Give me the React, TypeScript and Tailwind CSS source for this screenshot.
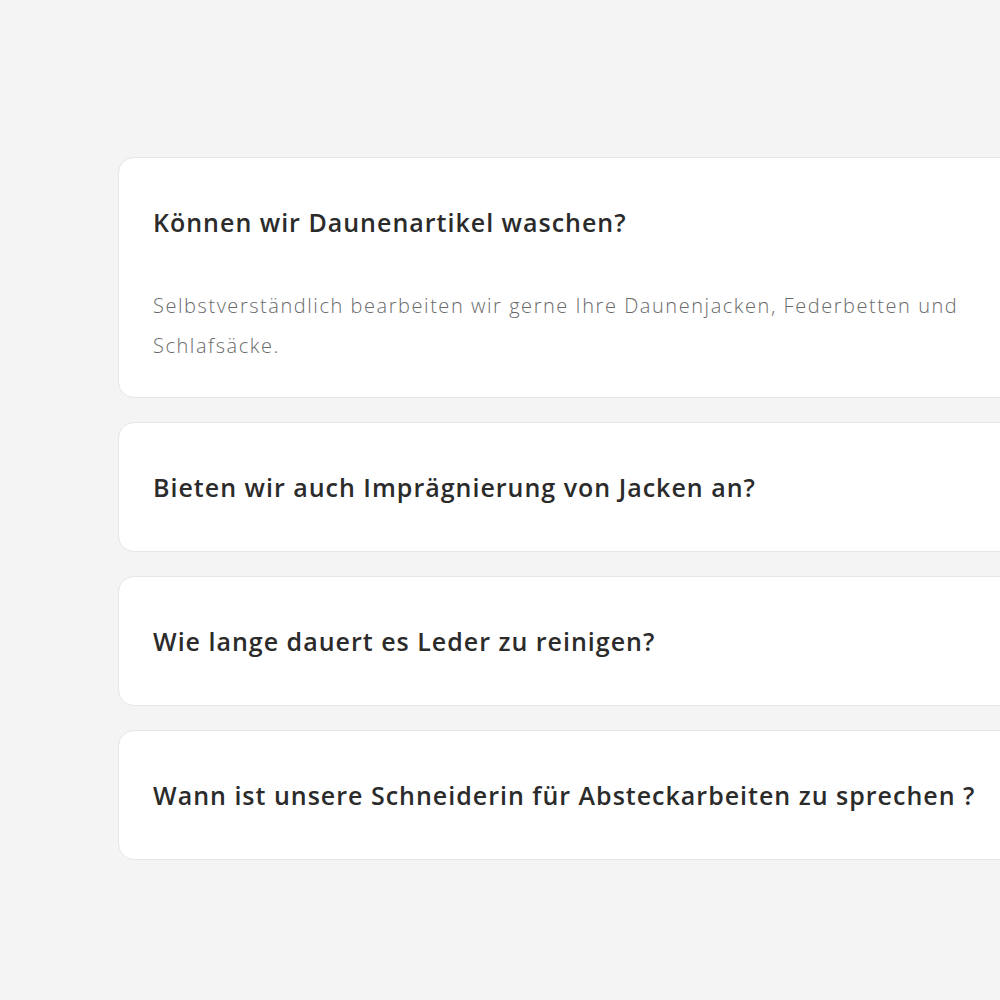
import React from 'react';

interface FaqItem {
  question: string;
  answer?: string;
}

const faqs: FaqItem[] = [
  {
    question: 'Können wir Daunenartikel waschen?',
    answer:
      'Selbstverständlich bearbeiten wir gerne Ihre Daunenjacken, Federbetten und Schlafsäcke.',
  },
  { question: 'Bieten wir auch Imprägnierung von Jacken an?' },
  { question: 'Wie lange dauert es Leder zu reinigen?' },
  { question: 'Wann ist unsere Schneiderin für Absteckarbeiten zu sprechen ?' },
];

function FaqCard({ item }: { item: FaqItem }) {
  return (
    <div className="w-[920px] shrink-0 rounded-2xl border border-[#e6e6e6] bg-white px-[34px]">
      <h3 className="py-[40px] text-[25px] font-semibold leading-[48px] tracking-[1px] text-[#2b2b2b]">
        {item.question}
      </h3>
      {item.answer && (
        <p className="w-[830px] pb-[31px] text-[20px] font-light leading-[40px] tracking-[1.55px] text-[#6a6a6a]">
          {item.answer}
        </p>
      )}
    </div>
  );
}

export default function App() {
  return (
    <div
      className="min-h-screen w-full overflow-hidden bg-[#f4f4f4] pt-[157px] pl-[118px]"
      style={{ fontFamily: '"Open Sans", Lato, sans-serif' }}
    >
      <div className="flex flex-col gap-[24px]">
        {faqs.map((item) => (
          <FaqCard key={item.question} item={item} />
        ))}
      </div>
    </div>
  );
}
